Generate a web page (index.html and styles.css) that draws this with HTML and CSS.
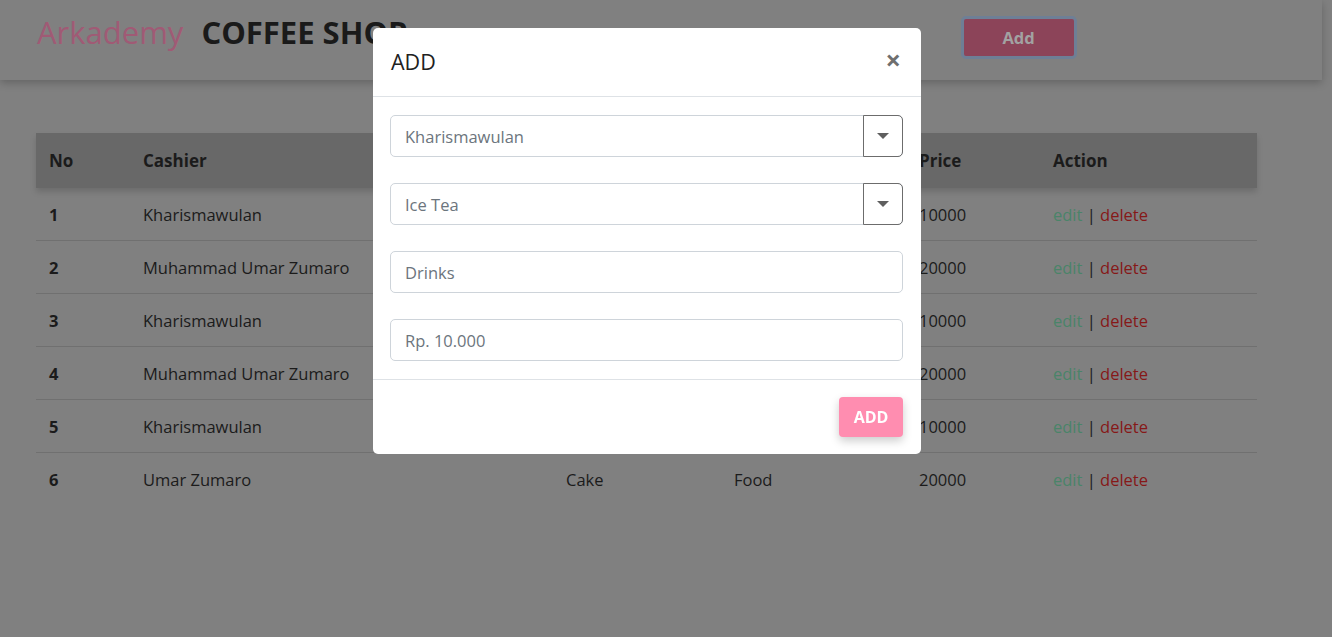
FILE: index.html
```html
<!DOCTYPE html>
<html>
<head>
    <title>Arkademy Coffee Shop</title>
    <link rel="stylesheet" href="styles.css">
</head>
<body>
    <nav class="navbar">
        <span class="brand">Arkademy</span>
        <span class="brand-name">COFFEE SHOP</span>
        <button class="btn-add">Add</button>
    </nav>

    <table class="orders">
        <thead>
            <tr>
                <th class="col-no">No</th>
                <th class="col-cashier">Cashier</th>
                <th class="col-product">Product</th>
                <th class="col-category">Category</th>
                <th class="col-price">Price</th>
                <th>Action</th>
            </tr>
        </thead>
        <tbody>
            <tr><td class="num">1</td><td>Kharismawulan</td><td>Ice Tea</td><td>Drinks</td><td>10000</td><td><a class="edit">edit</a> | <a class="delete">delete</a></td></tr>
            <tr><td class="num">2</td><td>Muhammad Umar Zumaro</td><td>Pancake</td><td>Food</td><td>20000</td><td><a class="edit">edit</a> | <a class="delete">delete</a></td></tr>
            <tr><td class="num">3</td><td>Kharismawulan</td><td>Ice Tea</td><td>Drinks</td><td>10000</td><td><a class="edit">edit</a> | <a class="delete">delete</a></td></tr>
            <tr><td class="num">4</td><td>Muhammad Umar Zumaro</td><td>Pancake</td><td>Food</td><td>20000</td><td><a class="edit">edit</a> | <a class="delete">delete</a></td></tr>
            <tr><td class="num">5</td><td>Kharismawulan</td><td>Ice Tea</td><td>Drinks</td><td>10000</td><td><a class="edit">edit</a> | <a class="delete">delete</a></td></tr>
            <tr><td class="num">6</td><td>Umar Zumaro</td><td>Cake</td><td>Food</td><td>20000</td><td><a class="edit">edit</a> | <a class="delete">delete</a></td></tr>
        </tbody>
    </table>

    <!-- modal: add order -->
    <div class="modal">
        <div class="modal-dialog">
            <div class="modal-header">
                <h5 class="modal-title">ADD</h5>
                <span class="close">&times;</span>
            </div>
            <div class="modal-body">
                <div class="select">
                    <span class="select-text">Kharismawulan</span>
                    <span class="select-btn"><span class="caret"></span></span>
                </div>
                <div class="select">
                    <span class="select-text">Ice Tea</span>
                    <span class="select-btn"><span class="caret"></span></span>
                </div>
                <input class="form-control" type="text" placeholder="Drinks">
                <input class="form-control" type="text" placeholder="Rp. 10.000">
            </div>
            <div class="modal-footer">
                <button class="btn-submit">ADD</button>
            </div>
        </div>
    </div>
</body>
</html>
```

FILE: styles.css
```css
body { margin: 0; background: #808080; color: #1b1b1b; font-family: "Open Sans", "Noto Sans", sans-serif; font-size: 16.5px; height: 637px; overflow: hidden; }

.navbar { width: calc(100% - 10px); height: 80px; box-sizing: border-box; padding: 10px 0 0 37px; display: flex; align-items: flex-start; background: #808080; box-shadow: 0 3px 8px rgba(0, 0, 0, 0.22); }
.brand { color: #a05a75; font-size: 31px; line-height: 44px; margin-right: 18px; }
.brand-name { color: #1a1a1a; font-size: 31px; line-height: 44px; font-weight: 700; }
.btn-add { flex-shrink: 0; margin: 6px 0 0 553px; width: 116px; height: 43px; box-sizing: border-box; background: #8c4459; color: #a2a2a2; font-family: inherit; font-size: 16.5px; font-weight: 700; border: 3px solid #6e7f96; border-radius: 5px; }

.orders { margin: 53px 0 0 36px; width: 1221px; border-collapse: collapse; }
.orders thead tr { box-shadow: 0 4px 6px rgba(0, 0, 0, 0.15); }
.orders th { background: #686868; text-align: left; font-weight: 700; font-size: 17px; height: 55px; padding: 0 13px; }
.orders td { height: 52px; padding: 0 13px; border-bottom: 1px solid #707070; }
.orders tr:last-child td { border-bottom: none; }
.orders .num { font-weight: 700; }
.col-no { width: 68px; }
.col-cashier { width: 397px; }
.col-product { width: 142px; }
.col-category { width: 159px; }
.col-price { width: 108px; }
.edit { color: #4a8469; }
.delete { color: #861818; }

.modal { position: fixed; top: 0; left: 0; right: 0; bottom: 0; }
.modal-dialog { margin: 28px 0 0 373px; width: 548px; background: #fff; border-radius: 5px; }
.modal-header { height: 69px; box-sizing: border-box; padding: 0 18px 2px 18px; display: flex; align-items: center; justify-content: space-between; border-bottom: 1px solid #dee2e6; }
.modal-title { margin: 0; font-size: 21.5px; font-weight: 400; color: #212121; }
.close { color: #6f6f6f; font-size: 27px; font-weight: 700; line-height: 1; margin: 0 2px 4px 0; }
.modal-body { padding: 18px 18px 18px 17px; display: flex; flex-direction: column; gap: 26px; }
.select { display: flex; height: 42px; box-sizing: border-box; border: 1px solid #ced4da; border-radius: 5px; }
.select-text { flex: 1; display: flex; align-items: center; padding-left: 14px; color: #6c757d; }
.select-btn { width: 38px; margin: -1px -1px -1px 0; border: 1px solid #6c6c6c; border-radius: 0 5px 5px 0; display: flex; align-items: center; justify-content: center; }
.caret { width: 0; height: 0; border-left: 6px solid transparent; border-right: 6px solid transparent; border-top: 6px solid #5f5f5f; }
.form-control { height: 42px; box-sizing: border-box; padding: 0 14px; border: 1px solid #ced4da; border-radius: 5px; font-family: inherit; font-size: 16.5px; color: #495057; }
.form-control::placeholder { color: #6c757d; }
.modal-footer { height: 75px; box-sizing: border-box; border-top: 1px solid #dee2e6; padding: 0 18px; display: flex; align-items: center; justify-content: flex-end; }
.btn-submit { width: 64px; height: 40px; background: #ff8db0; color: #fff; border: none; border-radius: 4px; font-family: inherit; font-size: 16px; font-weight: 700; box-shadow: 0 4px 10px rgba(0, 0, 0, 0.2); }
```
